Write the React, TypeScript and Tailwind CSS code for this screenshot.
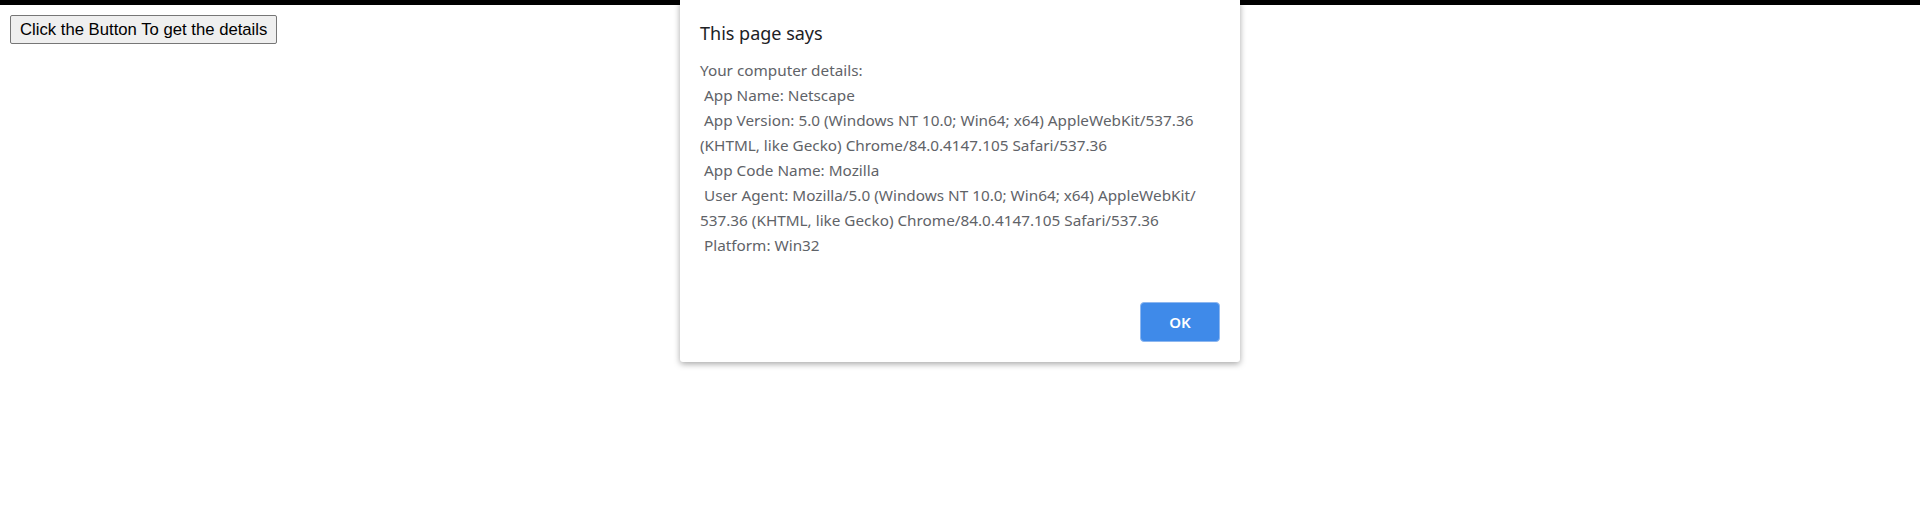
const lines = [
  "Your computer details:",
  " App Name: Netscape",
  " App Version: 5.0 (Windows NT 10.0; Win64; x64) AppleWebKit/537.36",
  "(KHTML, like Gecko) Chrome/84.0.4147.105 Safari/537.36",
  " App Code Name: Mozilla",
  " User Agent: Mozilla/5.0 (Windows NT 10.0; Win64; x64) AppleWebKit/",
  "537.36 (KHTML, like Gecko) Chrome/84.0.4147.105 Safari/537.36",
  " Platform: Win32",
];

function AlertDialog() {
  return (
    <div
      className="absolute left-[680px] top-0 w-[560px] bg-white rounded-b-[3px] shadow-[0_2px_6px_rgba(0,0,0,0.35)] px-[20px] pt-[20px] pb-[20px]"
      style={{ fontFamily: '"Noto Sans", "Open Sans", sans-serif' }}
    >
      <div className="text-[18px] leading-[26px] text-[#202124]">This page says</div>
      <div className="mt-[12px] text-[15.3px] leading-[25px] text-[#5f6368]">
        {lines.map((l, i) => (
          <div key={i} className="whitespace-pre">
            {l}
          </div>
        ))}
      </div>
      <div className="mt-[44px] flex justify-end">
        <button className="w-[80px] h-[40px] rounded-[4px] bg-[#3f8ae9] border border-[#8db7f0] text-white text-[15px] font-semibold">
          OK
        </button>
      </div>
    </div>
  );
}

export default function App() {
  return (
    <div className="relative w-[1920px] h-[510px] bg-white overflow-hidden">
      <div className="h-[5px] bg-black" />
      <div className="pl-[10px] pt-[10px]">
        <button
          className="h-[29px] px-[9px] bg-[#efefef] border border-[#767676] rounded-[2px] text-[16.7px] leading-[19px] text-black"
          style={{ fontFamily: '"Liberation Sans", Arial, sans-serif' }}
        >
          Click the Button To get the details
        </button>
      </div>
      <AlertDialog />
    </div>
  );
}
